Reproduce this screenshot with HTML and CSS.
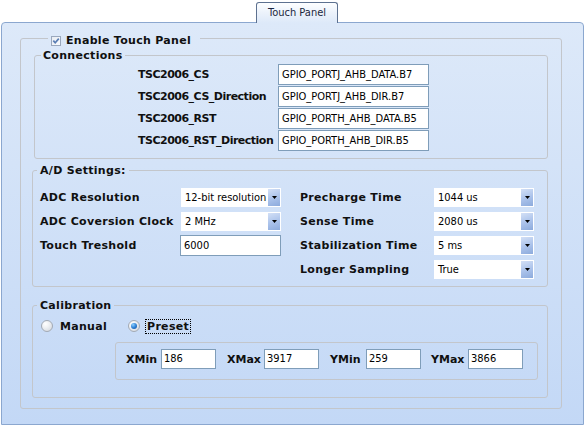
FILE: index.html
```html
<!DOCTYPE html>
<html>
<head>
<meta charset="utf-8">
<link rel="stylesheet" href="styles.css">
</head>
<body>
<div class="tabbar"><div class="tab">Touch Panel</div></div>
<div class="panel">
  <fieldset class="group outer">
    <legend class="outer-legend"><span class="check"><svg width="10" height="10" viewBox="0 0 10 10"><defs><linearGradient id="cg" x1="0" y1="0" x2="1" y2="1"><stop offset="0" stop-color="#e6ebf2"/><stop offset="1" stop-color="#fbfcfe"/></linearGradient></defs><rect x="0.5" y="0.5" width="9" height="9" fill="url(#cg)" stroke="#9aa8bd"/><path d="M2.3 4.6 L4.2 6.8 L7.8 2.6" fill="none" stroke="#5a7eb4" stroke-width="1.7"/></svg></span><span>Enable Touch Panel</span></legend>

    <fieldset class="group conn">
      <legend>Connections</legend>
      <div class="conn-grid">
        <span class="lbl tight">TSC2006_CS</span><div class="field">GPIO_PORTJ_AHB_DATA.B7</div>
        <span class="lbl tight">TSC2006_CS_Direction</span><div class="field">GPIO_PORTJ_AHB_DIR.B7</div>
        <span class="lbl tight">TSC2006_RST</span><div class="field">GPIO_PORTH_AHB_DATA.B5</div>
        <span class="lbl tight">TSC2006_RST_Direction</span><div class="field">GPIO_PORTH_AHB_DIR.B5</div>
      </div>
    </fieldset>

    <fieldset class="group ad">
      <legend>A/D Settings:</legend>
      <div class="ad-grid">
        <span class="lbl">ADC Resolution</span>
        <div class="combo"><span class="val">12-bit resolution</span><span class="btn"><svg width="5" height="3" viewBox="0 0 5 3"><path d="M0 0H5L2.5 3Z" fill="#000"/></svg></span></div>
        <span></span>
        <span class="lbl">Precharge Time</span>
        <div class="combo"><span class="val">1044 us</span><span class="btn"><svg width="5" height="3" viewBox="0 0 5 3"><path d="M0 0H5L2.5 3Z" fill="#000"/></svg></span></div>

        <span class="lbl">ADC Coversion Clock</span>
        <div class="combo"><span class="val">2 MHz</span><span class="btn"><svg width="5" height="3" viewBox="0 0 5 3"><path d="M0 0H5L2.5 3Z" fill="#000"/></svg></span></div>
        <span></span>
        <span class="lbl">Sense Time</span>
        <div class="combo"><span class="val">2080 us</span><span class="btn"><svg width="5" height="3" viewBox="0 0 5 3"><path d="M0 0H5L2.5 3Z" fill="#000"/></svg></span></div>

        <span class="lbl">Touch Treshold</span>
        <div class="field thresh">6000</div>
        <span></span>
        <span class="lbl">Stabilization Time</span>
        <div class="combo"><span class="val">5 ms</span><span class="btn"><svg width="5" height="3" viewBox="0 0 5 3"><path d="M0 0H5L2.5 3Z" fill="#000"/></svg></span></div>

        <span></span>
        <span></span>
        <span></span>
        <span class="lbl">Longer Sampling</span>
        <div class="combo"><span class="val">True</span><span class="btn"><svg width="5" height="3" viewBox="0 0 5 3"><path d="M0 0H5L2.5 3Z" fill="#000"/></svg></span></div>
      </div>
    </fieldset>

    <fieldset class="group calib">
      <legend>Calibration</legend>
      <div class="radios">
        <div class="radio-item manual"><span class="radio"></span><span class="lbl">Manual</span></div>
        <div class="radio-item"><span class="radio on"><span class="dot"></span></span><span class="lbl focus">Preset</span></div>
      </div>
      <div class="preset-box">
        <span class="lbl small">XMin</span><div class="field num">186</div>
        <span class="lbl small">XMax</span><div class="field num">3917</div>
        <span class="lbl small">YMin</span><div class="field num">259</div>
        <span class="lbl small">YMax</span><div class="field num">3866</div>
      </div>
    </fieldset>
  </fieldset>
</div>
</body>
</html>
```
FILE: styles.css
```css
body {
  margin: 0;
  background: #ffffff;
  font-family: "DejaVu Sans", sans-serif;
}

.tabbar {
  height: 22px;
  display: flex;
  align-items: flex-end;
  padding-left: 256px;
}

.tab {
  position: relative;
  z-index: 1;
  width: 82px;
  height: 21px;
  margin-bottom: -1px;
  box-sizing: border-box;
  border: 1px solid #5d7190;
  border-bottom: none;
  border-radius: 3px 3px 0 0;
  background: linear-gradient(#fdfeff, #eaf1fb 55%, #dde9f9);
  font: 11px/19px "DejaVu Sans", sans-serif;
  font-stretch: condensed;
  text-align: center;
  color: #1b2740;
}

.panel {
  margin-left: 1px;
  width: 583px;
  height: 403px;
  box-sizing: border-box;
  border: 1px solid #8ba7cf;
  border-radius: 4px 4px 0 0;
  background: linear-gradient(#dde9f9, #c3d8f6);
  padding: 7px 0 0 18px;
}

fieldset {
  margin: 0;
  min-width: 0;
  border: 1px solid #c3c6cb;
  border-radius: 3px;
}

legend {
  padding: 0 2px;
  font: bold 11px/13px "DejaVu Sans", sans-serif;
  letter-spacing: 0.3px;
  color: #101010;
}

.lbl {
  font: bold 11px/13px "DejaVu Sans", sans-serif;
  letter-spacing: 0.3px;
  color: #101010;
  white-space: nowrap;
}

.lbl.tight {
  letter-spacing: -0.5px;
}

.outer {
  width: 542px;
  box-sizing: border-box;
  padding: 2px 13px 10px 11px;
}

.outer-legend {
  margin-left: 16px;
  padding: 4px 9px 0 3px;
  display: flex;
  align-items: center;
  gap: 5px;
}

.check {
  display: flex;
  width: 10px;
  height: 10px;
  margin-top: 1px;
}

.conn {
  margin-left: 2px;
  padding: 2px 0 7px 6px;
}

.conn-grid {
  display: grid;
  grid-template-columns: 140px 151px;
  grid-auto-rows: 21px;
  row-gap: 1px;
  align-items: center;
  padding-left: 97px;
}

.field {
  box-sizing: border-box;
  height: 21px;
  border: 1px solid #7f9db9;
  background: #ffffff;
  padding-left: 3px;
  font: 11px/19px "DejaVu Sans", sans-serif;
  font-stretch: condensed;
  color: #000;
  white-space: nowrap;
  overflow: hidden;
}

.ad {
  margin-top: 5px;
  padding: 11px 0 7px 4px;
}

.ad legend,
.calib legend {
  padding: 0 3px;
}

.ad-grid {
  display: grid;
  grid-template-columns: 141px 100px 19px 134px 100px;
  grid-auto-rows: 19px;
  row-gap: 5px;
  align-items: center;
  padding-left: 3px;
}

.combo {
  box-sizing: border-box;
  height: 19px;
  width: 100px;
  background: #ffffff;
  display: flex;
  align-items: center;
  padding: 1px 1px 1px 4px;
}

.combo .val {
  flex: 1;
  font: 11px/17px "DejaVu Sans", sans-serif;
  font-stretch: condensed;
  color: #000;
  white-space: nowrap;
}

.combo .btn {
  width: 12px;
  height: 17px;
  display: flex;
  align-items: center;
  justify-content: center;
  background: linear-gradient(160deg, #d3e0f6, #a9c1ea 55%, #8dabdc);
}

.thresh {
  width: 101px;
  margin-left: -1px;
}

.calib {
  margin-top: 12px;
  padding: 7px 8px 17px 4px;
}

.radios {
  display: flex;
  align-items: center;
  height: 14px;
  margin-left: 4px;
}

.radio-item {
  display: flex;
  align-items: center;
  gap: 7px;
}

.radio-item.manual {
  margin-right: 21px;
}

.radio {
  box-sizing: border-box;
  width: 12px;
  height: 12px;
  border-radius: 50%;
  border: 1px solid #a3aab4;
  background: radial-gradient(circle at 35% 30%, #ffffff 0%, #eef0f3 40%, #cfd4da 100%);
  display: flex;
  align-items: center;
  justify-content: center;
}

.radio .dot {
  width: 6px;
  height: 6px;
  border-radius: 50%;
  background: radial-gradient(circle at 35% 30%, #8fd0ff 0%, #2f82d6 50%, #134c96 100%);
}

.focus {
  outline: 1px dotted #000;
  outline-offset: 0;
  padding: 0 1px;
  margin-left: -1px;
}

.preset-box {
  margin: 9px 0 0 78px;
  width: 423px;
  height: 38px;
  box-sizing: border-box;
  border: 1px solid #c3c6cb;
  border-radius: 3px;
  padding: 6px 0 0 10px;
  display: grid;
  grid-template-columns: 35px 66px 37px 66px 36px 65px 37px 55px;
  grid-auto-rows: 20px;
  align-items: center;
}

.lbl.small {
  letter-spacing: 0;
}

.field.num {
  width: 55px;
  height: 20px;
  line-height: 18px;
  padding-left: 2px;
}
```
